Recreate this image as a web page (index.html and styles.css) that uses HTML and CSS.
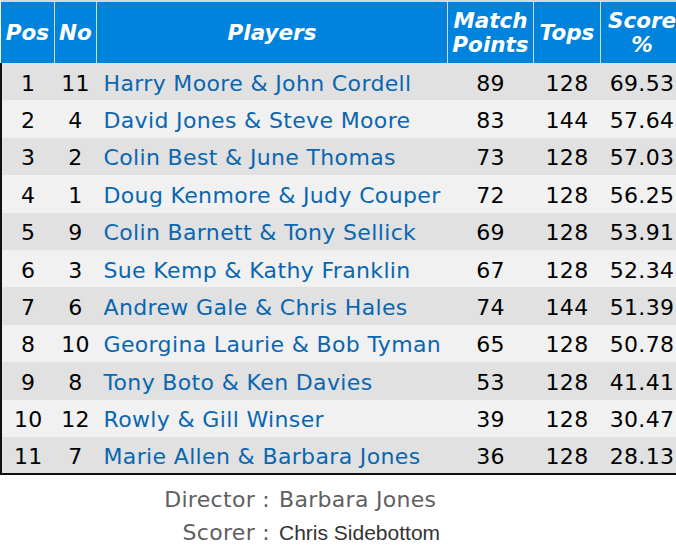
FILE: index.html
```html
<!DOCTYPE html>
<html>
<head>
<meta charset="utf-8">
<link rel="stylesheet" href="styles.css">
</head>
<body>
<div class="page">
<table class="results">
  <thead>
    <tr>
      <th class="c-pos">Pos</th>
      <th class="c-no">No</th>
      <th class="c-players">Players</th>
      <th class="c-mp">Match<br>Points</th>
      <th class="c-tops">Tops</th>
      <th class="c-score">Score<br>%</th>
    </tr>
  </thead>
  <tbody>
    <tr><td>1</td><td>11</td><td class="name"><a>Harry Moore &amp; John Cordell</a></td><td>89</td><td>128</td><td>69.53</td></tr>
    <tr><td>2</td><td>4</td><td class="name"><a>David Jones &amp; Steve Moore</a></td><td>83</td><td>144</td><td>57.64</td></tr>
    <tr><td>3</td><td>2</td><td class="name"><a>Colin Best &amp; June Thomas</a></td><td>73</td><td>128</td><td>57.03</td></tr>
    <tr><td>4</td><td>1</td><td class="name"><a>Doug Kenmore &amp; Judy Couper</a></td><td>72</td><td>128</td><td>56.25</td></tr>
    <tr><td>5</td><td>9</td><td class="name"><a>Colin Barnett &amp; Tony Sellick</a></td><td>69</td><td>128</td><td>53.91</td></tr>
    <tr><td>6</td><td>3</td><td class="name"><a>Sue Kemp &amp; Kathy Franklin</a></td><td>67</td><td>128</td><td>52.34</td></tr>
    <tr><td>7</td><td>6</td><td class="name"><a>Andrew Gale &amp; Chris Hales</a></td><td>74</td><td>144</td><td>51.39</td></tr>
    <tr><td>8</td><td>10</td><td class="name"><a>Georgina Laurie &amp; Bob Tyman</a></td><td>65</td><td>128</td><td>50.78</td></tr>
    <tr><td>9</td><td>8</td><td class="name"><a>Tony Boto &amp; Ken Davies</a></td><td>53</td><td>128</td><td>41.41</td></tr>
    <tr><td>10</td><td>12</td><td class="name"><a>Rowly &amp; Gill Winser</a></td><td>39</td><td>128</td><td>30.47</td></tr>
    <tr><td>11</td><td>7</td><td class="name"><a>Marie Allen &amp; Barbara Jones</a></td><td>36</td><td>128</td><td>28.13</td></tr>
  </tbody>
</table>
<div class="credits">
  <div class="label">Director :</div><div class="value">Barbara Jones</div>
  <div class="label">Scorer :</div><div class="value alt">Chris Sidebottom</div>
</div>
</div>
</body>
</html>
```
FILE: styles.css
```css
html, body {
  margin: 0;
  padding: 0;
  background: #ffffff;
  overflow: hidden;
}
.page {
  width: 681px;
  font-family: "DejaVu Sans", Verdana, sans-serif;
}
.results {
  border-collapse: collapse;
  width: 681px;
  table-layout: fixed;
  margin-top: 0;
}
.results th {
  background: #0083dd;
  color: #ffffff;
  font-style: italic;
  font-weight: bold;
  font-size: 21.5px;
  line-height: 24px;
  height: 61px;
  padding: 0;
  border-top: 2px solid #d8d8d8;
  border-left: 1px solid #d8d8d8;
  border-right: 1px solid #d8d8d8;
  text-align: center;
  vertical-align: middle;
  white-space: nowrap;
}
.results th:first-child { border-left: none; }
.c-pos { width: 53px; }
.c-no { width: 41px; }
.c-players { width: 350px; }
.c-mp { width: 85px; }
.c-tops { width: 66px; }
.c-score { width: 82px; }
.results td {
  font-size: 22px;
  letter-spacing: 0.35px;
  color: #000000;
  text-align: center;
  height: 37.4px;
  padding: 3px 0 0 0;
  box-sizing: border-box;
  white-space: nowrap;
}
.results tbody tr:nth-child(odd) td { background: #e1e1e1; }
.results tbody tr:nth-child(even) td { background: #f1f1f1; }
.results tbody td:first-child { border-left: 2px solid #111111; }
.results tbody tr:last-child td { border-bottom: 2px solid #111111; }
.results td.name {
  text-align: left;
  padding-left: 7px;
}
.results td.name a {
  color: #0a66b0;
  text-decoration: none;
}
.credits {
  display: grid;
  grid-template-columns: 270px auto;
  column-gap: 9px;
  row-gap: 0;
  padding-top: 8px;
}
.credits .label {
  text-align: right;
  color: #606060;
  font-size: 22px;
  line-height: 33px;
  letter-spacing: 0.3px;
}
.credits .value {
  color: #606060;
  font-size: 22px;
  line-height: 33px;
  letter-spacing: 0.3px;
}
.credits .value.alt {
  font-family: "Liberation Sans", Arial, sans-serif;
  color: #333333;
  font-size: 21px;
  letter-spacing: 0;
}
```
